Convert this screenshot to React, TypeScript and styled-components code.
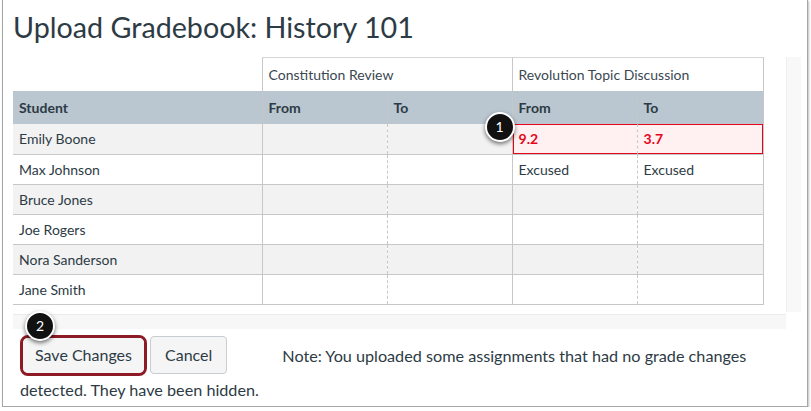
import styled, { createGlobalStyle } from "styled-components";

const GlobalStyle = createGlobalStyle`
  body {
    margin: 0;
    background: #ffffff;
    font-family: Lato, "Noto Sans", sans-serif;
    color: #2d3b45;
  }
`;

const Frame = styled.div`
  margin-left: 2px;
  width: 806px;
  height: 407px;
  border: 1px solid #a6a6a6;
  border-top: none;
  box-shadow: 1px 1px 2px rgba(0, 0, 0, 0.25);
  padding-left: 10px;
  box-sizing: border-box;
`;

const Title = styled.h1`
  margin: 0;
  padding-top: 9px;
  margin-bottom: 12px;
  font-size: 28.7px;
  line-height: 36px;
  font-weight: 400;
  color: #2d3b45;
`;

const GridArea = styled.div`
  display: flex;
  align-items: flex-start;
`;

const TableArea = styled.div`
  width: 773px;
  display: flex;
  flex-direction: column;
`;

const VBar = styled.div`
  width: 15px;
  height: 255px;
  background: #f8f8f8;
  border-left: 1px solid #efefef;
  box-sizing: border-box;
`;

const HBar = styled.div`
  margin-top: 9px;
  height: 14px;
  background: #f7f7f7;
  border-top: 1px solid #ebebeb;
`;

const Table = styled.table`
  width: 750px;
  table-layout: fixed;
  border-collapse: collapse;
  font-size: 14px;
`;

type Edge = "none" | "solid" | "dashed";

const edgeBorder = (e?: Edge) =>
  e === "solid" ? "1px solid #c7c7c7" : e === "dashed" ? "1px dashed #c7c7c7" : "none";

const GroupCell = styled.th<{ $edge?: Edge; $last?: boolean; $empty?: boolean }>`
  height: 33px;
  padding: 0 6px;
  text-align: left;
  font-weight: 400;
  font-size: 14px;
  color: #3b4852;
  border-top: ${(p) => (p.$empty ? "none" : "1px solid #d6d6d6")};
  border-left: ${(p) => edgeBorder(p.$edge)};
  border-right: ${(p) => (p.$last ? "1px solid #c7c7c7" : "none")};
`;

const HeadCell = styled.th<{ $edge?: Edge; $last?: boolean }>`
  height: 33px;
  padding: 0 6px;
  text-align: left;
  font-weight: 700;
  font-size: 14px;
  background: #bac6d0;
  color: #2d3b45;
  border-left: ${(p) => edgeBorder(p.$edge)};
  border-right: ${(p) => (p.$last ? "1px solid #c7c7c7" : "none")};
`;

const Row = styled.tr<{ $odd: boolean }>`
  background: ${(p) => (p.$odd ? "#f2f2f2" : "#ffffff")};
`;

const Cell = styled.td<{ $edge?: Edge; $last?: boolean; $error?: "left" | "right" }>`
  position: relative;
  height: 30px;
  padding: 0 6px;
  box-sizing: border-box;
  font-size: 14px;
  color: ${(p) => (p.$error ? "#e5061b" : "#2d3b45")};
  font-weight: ${(p) => (p.$error ? 700 : 400)};
  background: ${(p) => (p.$error ? "#fff0f1" : "transparent")};
  border-bottom: 1px solid #c7c7c7;
  border-left: ${(p) => edgeBorder(p.$edge)};
  border-right: ${(p) => (p.$last ? "1px solid #c7c7c7" : "none")};
  box-shadow: ${(p) =>
    p.$error === "left"
      ? "inset 1px 1px 0 #e5061b, inset 0 -1px 0 #e5061b"
      : p.$error === "right"
      ? "inset -1px 1px 0 #e5061b, inset 0 -1px 0 #e5061b"
      : "none"};
`;

const Callout = styled.span<{ $left: number; $top: number }>`
  position: absolute;
  left: ${(p) => p.$left}px;
  top: ${(p) => p.$top}px;
  width: 26px;
  height: 26px;
  border-radius: 50%;
  background: #111111;
  border: 2px solid #ffffff;
  box-shadow: 0 2px 4px rgba(0, 0, 0, 0.55);
  color: #ffffff;
  font-size: 14px;
  line-height: 26px;
  font-weight: 400;
  text-align: center;
  z-index: 2;
`;

const Footer = styled.div`
  margin-top: 6px;
  padding-left: 7px;
  width: 770px;
  font-size: 16px;
  line-height: 20px;
  color: #2d3b45;
`;

const Highlight = styled.span`
  position: relative;
  display: inline-block;
  vertical-align: middle;
  border: 3px solid #8d1a25;
  border-radius: 8px;
  line-height: 0;
`;

const Button = styled.button<{ $bare?: boolean }>`
  display: inline-block;
  vertical-align: middle;
  height: ${(p) => (p.$bare ? "35px" : "38px")};
  padding: 0 ${(p) => (p.$bare ? "12px" : "14px")};
  font-family: Lato, "Noto Sans", sans-serif;
  font-size: 16px;
  line-height: 20px;
  color: #2d3b45;
  background: #f5f5f5;
  border: ${(p) => (p.$bare ? "none" : "1px solid #c7cdd1")};
  border-radius: ${(p) => (p.$bare ? "5px" : "4px")};
  margin-left: ${(p) => (p.$bare ? "0" : "3px")};
`;

const Note = styled.span`
  margin-left: 55px;
  vertical-align: middle;
  font-size: 16.2px;
  line-height: 27px;
`;

const students = ["Emily Boone", "Max Johnson", "Bruce Jones", "Joe Rogers", "Nora Sanderson", "Jane Smith"];

export default function App() {
  return (
    <>
      <GlobalStyle />
      <Frame>
        <Title>Upload Gradebook: History 101</Title>
        <GridArea>
          <TableArea>
            <Table>
              <colgroup>
                <col style={{ width: 249 }} />
                <col style={{ width: 125 }} />
                <col style={{ width: 125 }} />
                <col style={{ width: 125 }} />
                <col style={{ width: 126 }} />
              </colgroup>
              <thead>
                <tr>
                  <GroupCell $empty />
                  <GroupCell colSpan={2} $edge="solid">Constitution Review</GroupCell>
                  <GroupCell colSpan={2} $edge="solid" $last>Revolution Topic Discussion</GroupCell>
                </tr>
                <tr>
                  <HeadCell>Student</HeadCell>
                  <HeadCell $edge="solid">From</HeadCell>
                  <HeadCell $edge="dashed">To</HeadCell>
                  <HeadCell $edge="solid">From</HeadCell>
                  <HeadCell $edge="dashed" $last>To</HeadCell>
                </tr>
              </thead>
              <tbody>
                {students.map((name, i) => (
                  <Row key={name} $odd={i % 2 === 0}>
                    <Cell>{name}</Cell>
                    <Cell $edge="solid" />
                    <Cell $edge="dashed" />
                    {i === 0 ? (
                      <>
                        <Cell $edge="solid" $error="left">
                          <Callout $left={-28} $top={-12}>1</Callout>
                          9.2
                        </Cell>
                        <Cell $edge="dashed" $last $error="right">3.7</Cell>
                      </>
                    ) : (
                      <>
                        <Cell $edge="solid">{i === 1 ? "Excused" : ""}</Cell>
                        <Cell $edge="dashed" $last>{i === 1 ? "Excused" : ""}</Cell>
                      </>
                    )}
                  </Row>
                ))}
              </tbody>
            </Table>
            <HBar />
          </TableArea>
          <VBar />
        </GridArea>
        <Footer>
          <Highlight>
            <Callout $left={2} $top={-27}>2</Callout>
            <Button $bare>Save Changes</Button>
          </Highlight>
          <Button>Cancel</Button>
          <Note>Note: You uploaded some assignments that had no grade changes detected. They have been hidden.</Note>
        </Footer>
      </Frame>
    </>
  );
}
